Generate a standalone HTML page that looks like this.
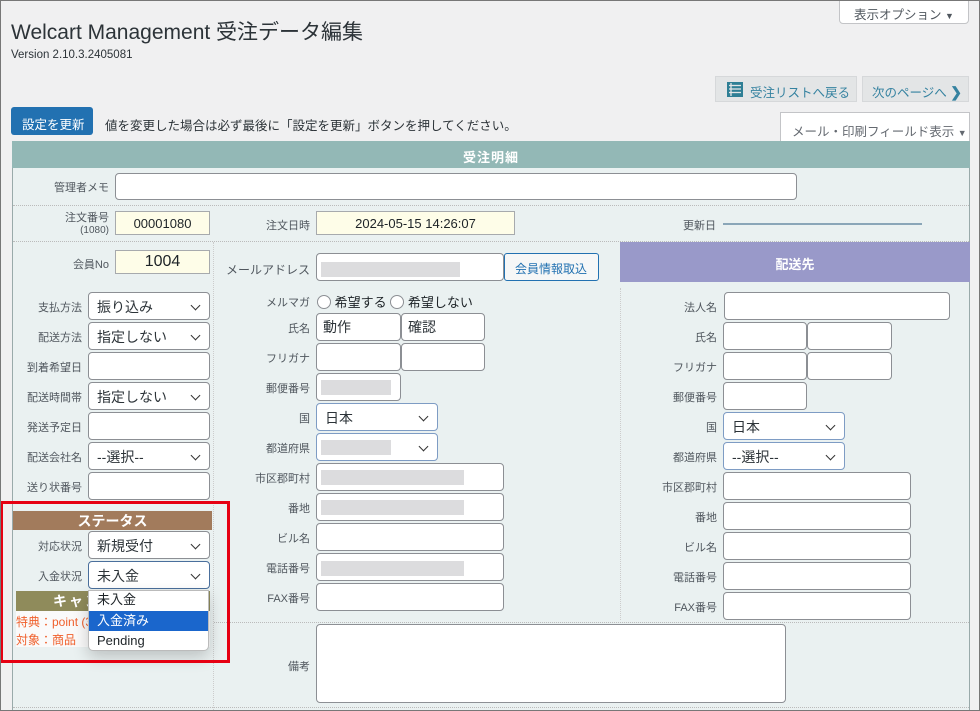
<!DOCTYPE html>
<html><head><meta charset="utf-8"><style>
*{box-sizing:border-box;margin:0;padding:0}
body{width:980px;height:711px;overflow:hidden;background:#f0f0f1;font-family:"Liberation Sans","Noto Sans CJK JP",sans-serif;color:#3c434a;position:relative}
.a{position:absolute}
.lb{position:absolute;font-size:11px;color:#50575e;text-align:right;white-space:nowrap}
.in{position:absolute;background:#fff;border:1px solid #8c8f94;border-radius:4px}
.sel{position:absolute;background:#fff;border:1px solid #8c8f94;border-radius:4px;font-size:14px;color:#2c3338;padding:4px 0 0 8px;white-space:nowrap}
.sel::after{content:"";position:absolute;right:10px;top:9px;width:6px;height:6px;border-right:1.6px solid #333;border-bottom:1.6px solid #333;transform:rotate(45deg)}
.gb{position:absolute;background:#dcdcde;height:15px}
.dh{position:absolute;height:0;border-top:1px dotted #bbb}
.dv{position:absolute;width:0;border-left:1px dotted #ccc}
</style></head><body>
<div class="a" style="left:0;top:0;width:980px;height:711px;border:1px solid #777;z-index:50;pointer-events:none"></div>
<div class="a" style="left:11px;top:16px;font-size:21px;color:#2c3338;white-space:nowrap">Welcart Management 受注データ編集</div>
<div class="a" style="left:11px;top:49px;font-size:11.5px;color:#2c3338">Version 2.10.3.2405081</div>
<div class="a" style="left:839px;top:-2px;width:130px;height:26px;background:#fff;border:1px solid #c3c4c7;border-radius:0 0 4px 4px;font-size:12.5px;color:#50575e;padding:5px 0 0 14px;white-space:nowrap">表示オプション <span style="font-size:9px">▼</span></div>
<div class="a" style="left:715px;top:76px;width:142px;height:26px;background:#e3e5e6;border:1px solid #d6d8da;font-size:12.5px;color:#3582a0;padding:5px 0 0 34px;white-space:nowrap">受注リストへ戻る</div>
<svg class="a" style="left:726px;top:81px" width="18" height="17" viewBox="0 0 18 17"><rect x="1" y="1" width="16" height="15" fill="#2f7f95"/><g stroke="#e3e5e6" stroke-width="1.3"><line x1="3" y1="4.5" x2="15" y2="4.5"/><line x1="3" y1="8" x2="15" y2="8"/><line x1="3" y1="11.5" x2="15" y2="11.5"/><line x1="5" y1="2" x2="5" y2="15"/></g></svg>
<div class="a" style="left:862px;top:76px;width:107px;height:26px;background:#e3e5e6;border:1px solid #d6d8da;font-size:12.5px;color:#3582a0;padding:5px 0 0 9px;white-space:nowrap">次のページへ <b style="font-size:14px">❯</b></div>
<div class="a" style="left:11px;top:107px;width:82px;height:28px;background:#2271b1;border-radius:3px;color:#fff;font-size:12.5px;padding:7px 0 0 11px;white-space:nowrap">設定を更新</div>
<div class="a" style="left:105px;top:115px;font-size:12.5px;color:#2c3338;white-space:nowrap">値を変更した場合は必ず最後に「設定を更新」ボタンを押してください。</div>
<div class="a" style="left:780px;top:112px;width:190px;height:30px;background:#fff;border:1px solid #c3c4c7;border-bottom:none;font-size:12.5px;color:#646970;padding:8px 0 0 11px;white-space:nowrap">メール・印刷フィールド表示 <span style="font-size:9px">▼</span></div>
<!-- panel -->
<div class="a" style="left:12px;top:141px;width:958px;height:570px;background:#eaf1f1;border:1px solid #9aa;border-bottom:none"></div>
<div class="a" style="left:12px;top:141px;width:958px;height:27px;background:#93b8b6;color:#fff;font-weight:bold;font-size:13px;text-align:center;padding-top:6px;letter-spacing:1px">受注明細</div>
<div class="lb" style="right:871px;top:179px">管理者メモ</div>
<div class="in" style="left:115px;top:173px;width:682px;height:27px"></div>
<div class="dh" style="left:13px;top:205px;width:956px"></div>
<div class="lb" style="right:871px;top:209px">注文番号</div>
<div class="lb" style="right:871px;top:225px;font-size:10px">(1080)</div>
<div class="in" style="left:115px;top:211px;width:95px;height:24px;background:#fefde8;border-color:#a7aaad;border-radius:0;font-size:13px;text-align:center;padding-top:4px;color:#1d2327">00001080</div>
<div class="lb" style="right:670px;top:217px">注文日時</div>
<div class="in" style="left:316px;top:211px;width:199px;height:24px;background:#fefde8;border-color:#a7aaad;border-radius:0;font-size:13px;text-align:center;padding-top:4px;color:#1d2327">2024-05-15 14:26:07</div>
<div class="lb" style="right:264px;top:217px">更新日</div>
<div class="a" style="left:723px;top:223px;width:199px;height:2px;background:#8aa6b8"></div>
<div class="dh" style="left:13px;top:241px;width:956px"></div>
<div class="dv" style="left:213px;top:242px;height:468px"></div>
<div class="dv" style="left:620px;top:288px;height:332px"></div>
<div class="lb" style="right:871px;top:256px">会員No</div>
<div class="in" style="left:115px;top:250px;width:95px;height:24px;background:#fefde8;border-color:#a7aaad;border-radius:0;font-size:16px;text-align:center;padding-top:2px;color:#1d2327">1004</div>
<div class="lb" style="right:670px;top:261px;font-size:12px">メールアドレス</div>
<div class="in" style="left:316px;top:253px;width:188px;height:28px"></div><div class="gb" style="left:321px;top:262px;width:139px"></div>
<div class="a" style="left:504px;top:253px;width:95px;height:28px;background:#f6f7f7;border:1px solid #2271b1;border-radius:3px;color:#2271b1;font-size:12px;padding:6px 0 0 10px;white-space:nowrap">会員情報取込</div>
<div class="a" style="left:620px;top:242px;width:350px;height:40px;background:#9999c9;color:#fff;font-weight:bold;font-size:13px;text-align:center;padding-top:12px">配送先</div>
<!-- left column -->
<div class="lb" style="right:898px;top:299px">支払方法</div><div class="sel" style="left:88px;top:292px;width:122px;height:28px">振り込み</div>
<div class="lb" style="right:898px;top:329px">配送方法</div><div class="sel" style="left:88px;top:322px;width:122px;height:28px">指定しない</div>
<div class="lb" style="right:898px;top:359px">到着希望日</div><div class="in" style="left:88px;top:352px;width:122px;height:28px"></div>
<div class="lb" style="right:898px;top:389px">配送時間帯</div><div class="sel" style="left:88px;top:382px;width:122px;height:28px">指定しない</div>
<div class="lb" style="right:898px;top:419px">発送予定日</div><div class="in" style="left:88px;top:412px;width:122px;height:28px"></div>
<div class="lb" style="right:898px;top:449px">配送会社名</div><div class="sel" style="left:88px;top:442px;width:122px;height:28px">--選択--</div>
<div class="lb" style="right:898px;top:479px">送り状番号</div><div class="in" style="left:88px;top:472px;width:122px;height:28px"></div>
<!-- middle -->
<div class="lb" style="right:670px;top:294px">メルマガ</div>
<div class="a" style="left:317px;top:292px;font-size:13px;color:#1d2327;white-space:nowrap"><span style="display:inline-block;width:14px;height:14px;border:1px solid #8c8f94;border-radius:50%;background:#fff;vertical-align:-2px"></span> 希望する <span style="display:inline-block;width:14px;height:14px;border:1px solid #8c8f94;border-radius:50%;background:#fff;vertical-align:-2px"></span> 希望しない</div>
<div class="lb" style="right:670px;top:320px">氏名</div>
<div class="in" style="left:316px;top:313px;width:85px;height:28px;font-size:14px;padding:3px 0 0 6px;color:#2c3338">動作</div><div class="in" style="left:401px;top:313px;width:84px;height:28px;font-size:14px;padding:3px 0 0 6px;color:#2c3338">確認</div>
<div class="lb" style="right:670px;top:350px">フリガナ</div>
<div class="in" style="left:316px;top:343px;width:85px;height:28px"></div><div class="in" style="left:401px;top:343px;width:84px;height:28px"></div>
<div class="lb" style="right:670px;top:380px">郵便番号</div>
<div class="in" style="left:316px;top:373px;width:85px;height:28px"></div><div class="gb" style="left:321px;top:380px;width:70px"></div>
<div class="lb" style="right:670px;top:410px">国</div><div class="sel" style="left:316px;top:403px;width:122px;height:28px;border-color:#7e9cc4">日本</div>
<div class="lb" style="right:670px;top:440px">都道府県</div><div class="sel" style="left:316px;top:433px;width:122px;height:28px;border-color:#7e9cc4"></div><div class="gb" style="left:321px;top:440px;width:70px"></div>
<div class="lb" style="right:670px;top:470px">市区郡町村</div><div class="in" style="left:316px;top:463px;width:188px;height:28px"></div><div class="gb" style="left:321px;top:470px;width:143px"></div>
<div class="lb" style="right:670px;top:500px">番地</div><div class="in" style="left:316px;top:493px;width:188px;height:28px"></div><div class="gb" style="left:321px;top:500px;width:143px"></div>
<div class="lb" style="right:670px;top:530px">ビル名</div><div class="in" style="left:316px;top:523px;width:188px;height:28px"></div>
<div class="lb" style="right:670px;top:560px">電話番号</div><div class="in" style="left:316px;top:553px;width:188px;height:28px"></div><div class="gb" style="left:321px;top:561px;width:143px"></div>
<div class="lb" style="right:670px;top:590px">FAX番号</div><div class="in" style="left:316px;top:583px;width:188px;height:28px"></div>
<!-- right -->
<div class="lb" style="right:263px;top:299px">法人名</div><div class="in" style="left:724px;top:292px;width:226px;height:28px"></div>
<div class="lb" style="right:263px;top:329px">氏名</div><div class="in" style="left:723px;top:322px;width:84px;height:28px"></div><div class="in" style="left:807px;top:322px;width:85px;height:28px"></div>
<div class="lb" style="right:263px;top:359px">フリガナ</div><div class="in" style="left:723px;top:352px;width:84px;height:28px"></div><div class="in" style="left:807px;top:352px;width:85px;height:28px"></div>
<div class="lb" style="right:263px;top:389px">郵便番号</div><div class="in" style="left:723px;top:382px;width:84px;height:28px"></div>
<div class="lb" style="right:263px;top:419px">国</div><div class="sel" style="left:723px;top:412px;width:122px;height:28px;border-color:#7e9cc4">日本</div>
<div class="lb" style="right:263px;top:449px">都道府県</div><div class="sel" style="left:723px;top:442px;width:122px;height:28px;border-color:#7e9cc4">--選択--</div>
<div class="lb" style="right:263px;top:479px">市区郡町村</div><div class="in" style="left:723px;top:472px;width:188px;height:28px"></div>
<div class="lb" style="right:263px;top:509px">番地</div><div class="in" style="left:723px;top:502px;width:188px;height:28px"></div>
<div class="lb" style="right:263px;top:539px">ビル名</div><div class="in" style="left:723px;top:532px;width:188px;height:28px"></div>
<div class="lb" style="right:263px;top:569px">電話番号</div><div class="in" style="left:723px;top:562px;width:188px;height:28px"></div>
<div class="lb" style="right:263px;top:599px">FAX番号</div><div class="in" style="left:723px;top:592px;width:188px;height:28px"></div>
<div class="dh" style="left:214px;top:622px;width:755px"></div>
<div class="lb" style="right:670px;top:658px">備考</div>
<div class="in" style="left:316px;top:624px;width:470px;height:79px"></div>
<div class="dh" style="left:13px;top:707px;width:956px"></div>
<!-- status -->
<div class="a" style="left:13px;top:511px;width:199px;height:19px;background:#a27b5c;color:#fff;font-weight:bold;font-size:14px;text-align:center">ステータス</div>
<div class="lb" style="right:898px;top:538px">対応状況</div><div class="sel" style="left:88px;top:531px;width:122px;height:28px">新規受付</div>
<div class="lb" style="right:898px;top:568px">入金状況</div><div class="sel" style="left:88px;top:561px;width:122px;height:28px;border:1.5px solid #4a6f9c">未入金</div>
<div class="a" style="left:16px;top:591px;width:194px;height:20px;background:#8f8b5b;color:#fff;font-weight:bold;font-size:14px;padding-left:37px;letter-spacing:2px">キャン</div>
<div class="a" style="left:16px;top:611px;width:194px;height:36px;background:#fafafa"></div>
<div class="a" style="left:16px;top:613px;font-size:12px;color:#f0602c;line-height:18px">特典：point (3<br>対象：商品</div>
<div class="a" style="left:88px;top:590px;width:121px;height:61px;background:#fff;border:1px solid #bbb;border-radius:0 0 5px 5px;box-shadow:0 6px 16px rgba(0,0,0,.2);font-size:13px;color:#1d2327;overflow:hidden">
<div style="height:20px;padding:0 0 0 8px;line-height:18px">未入金</div>
<div style="height:20px;padding:0 0 0 8px;background:#1a66cc;color:#fff;line-height:19px">入金済み</div>
<div style="height:20px;padding:0 0 0 8px;line-height:20px">Pending</div></div>
<div class="a" style="left:0;top:501px;width:230px;height:162px;border:3px solid #e60012"></div>
</body></html>
